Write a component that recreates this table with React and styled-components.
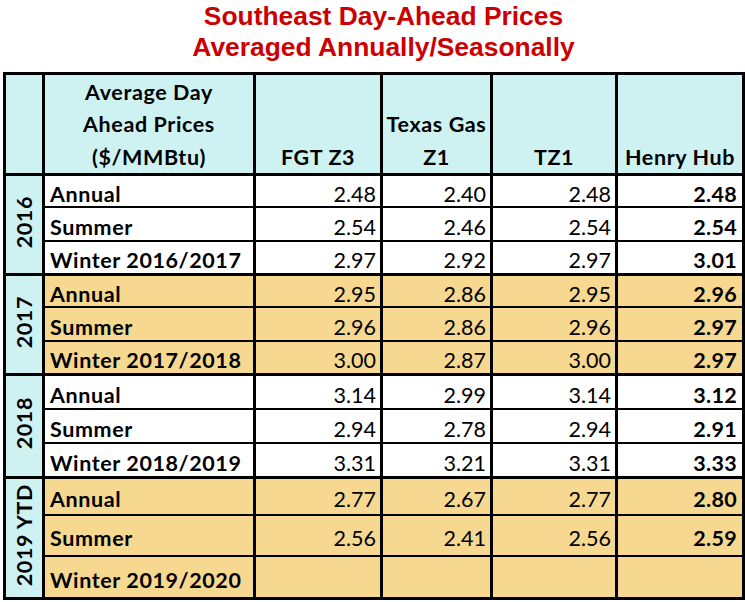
import React from "react";
import styled, { createGlobalStyle } from "styled-components";

const GlobalStyle = createGlobalStyle`
  html, body {
    margin: 0;
    padding: 0;
    background: #ffffff;
  }
  body {
    width: 745px;
    font-family: Lato, "Open Sans", sans-serif;
    color: #000000;
  }
`;

const CYAN = "#cdf2f1";
const TAN = "#f6d890";

const Title = styled.h1`
  margin: 0;
  padding: 1px 0 0 22px;
  font-family: "Liberation Sans", Arial, sans-serif;
  font-size: 26.4px;
  line-height: 31px;
  font-weight: 700;
  color: #cc0000;
  text-align: center;
`;

const Table = styled.table`
  margin: 9px 0 0 3px;
  width: 742px;
  table-layout: fixed;
  border-collapse: separate;
  border-spacing: 0;
  border-top: 3px solid #000;
  border-left: 3px solid #000;
  font-size: 21.5px;
`;

const Row = styled.tr`
  height: ${(p) => p.$h}px;
`;

const Cell = styled.td`
  box-sizing: border-box;
  padding: 5px 4px 0 4px;
  border-right: 3px solid #000;
  border-bottom: ${(p) => (p.$thick ? 3 : 2)}px solid #000;
  background: ${(p) => (p.$tan ? TAN : "#ffffff")};
  vertical-align: middle;
  line-height: 22px;
  white-space: nowrap;
`;

const LabelCell = styled(Cell)`
  padding-left: 5px;
  font-weight: 700;
  letter-spacing: 0.6px;
  text-align: left;
`;

const NumCell = styled(Cell)`
  text-align: right;
  font-weight: ${(p) => (p.$bold ? 700 : 400)};
  letter-spacing: ${(p) => (p.$bold ? 0.3 : 0)}px;
  padding-right: ${(p) => (p.$bold ? 5 : 4)}px;
`;

const HeadCell = styled.th`
  box-sizing: border-box;
  width: ${(p) => p.$w}px;
  padding: 0 2px;
  border-right: 3px solid #000;
  border-bottom: 3px solid #000;
  background: ${CYAN};
  font-weight: 700;
  letter-spacing: 0.6px;
  text-align: center;
  vertical-align: bottom;
  line-height: 32.5px;
  white-space: nowrap;
`;

const YearCell = styled.td`
  box-sizing: border-box;
  padding: 0;
  border-right: 3px solid #000;
  border-bottom: 3px solid #000;
  background: ${CYAN};
  text-align: center;
  vertical-align: middle;
`;

const YearText = styled.span`
  display: inline-block;
  writing-mode: vertical-rl;
  transform: rotate(180deg);
  font-weight: 700;
  letter-spacing: 0.6px;
  line-height: 26px;
  white-space: nowrap;
`;

const groups = [
  {
    year: "2016",
    tan: false,
    heights: [32, 34, 34],
    rows: [
      ["Annual", "2.48", "2.40", "2.48", "2.48"],
      ["Summer", "2.54", "2.46", "2.54", "2.54"],
      ["Winter 2016/2017", "2.97", "2.92", "2.97", "3.01"],
    ],
  },
  {
    year: "2017",
    tan: true,
    heights: [32, 34, 34],
    rows: [
      ["Annual", "2.95", "2.86", "2.95", "2.96"],
      ["Summer", "2.96", "2.86", "2.96", "2.97"],
      ["Winter 2017/2018", "3.00", "2.87", "3.00", "2.97"],
    ],
  },
  {
    year: "2018",
    tan: false,
    heights: [34, 34, 35],
    rows: [
      ["Annual", "3.14", "2.99", "3.14", "3.12"],
      ["Summer", "2.94", "2.78", "2.94", "2.91"],
      ["Winter 2018/2019", "3.31", "3.21", "3.31", "3.33"],
    ],
  },
  {
    year: "2019 YTD",
    tan: true,
    heights: [37, 41, 43],
    rows: [
      ["Annual", "2.77", "2.67", "2.77", "2.80"],
      ["Summer", "2.56", "2.41", "2.56", "2.59"],
      ["Winter 2019/2020", "", "", "", ""],
    ],
  },
];

export default function App() {
  return (
    <>
      <GlobalStyle />
      <Title>
        Southeast Day-Ahead Prices
        <br />
        Averaged Annually/Seasonally
      </Title>

      <Table>
        <thead>
          <Row $h={101}>
            <HeadCell $w={39} />
            <HeadCell $w={211}>
              Average Day
              <br />
              Ahead Prices
              <br />
              ($/MMBtu)
            </HeadCell>
            <HeadCell $w={127}>FGT Z3</HeadCell>
            <HeadCell $w={110}>
              Texas Gas
              <br />
              Z1
            </HeadCell>
            <HeadCell $w={125}>TZ1</HeadCell>
            <HeadCell $w={127}>Henry Hub</HeadCell>
          </Row>
        </thead>
        <tbody>
          {groups.map((g) =>
            g.rows.map((r, i) => {
              const last = i === g.rows.length - 1;
              return (
                <Row key={g.year + r[0]} $h={g.heights[i]}>
                  {i === 0 && (
                    <YearCell rowSpan={3}>
                      <YearText>{g.year}</YearText>
                    </YearCell>
                  )}
                  <LabelCell $tan={g.tan} $thick={last}>
                    {r[0]}
                  </LabelCell>
                  {r.slice(1).map((v, j) => (
                    <NumCell key={j} $tan={g.tan} $thick={last} $bold={j === 3}>
                      {v}
                    </NumCell>
                  ))}
                </Row>
              );
            })
          )}
        </tbody>
      </Table>
    </>
  );
}
